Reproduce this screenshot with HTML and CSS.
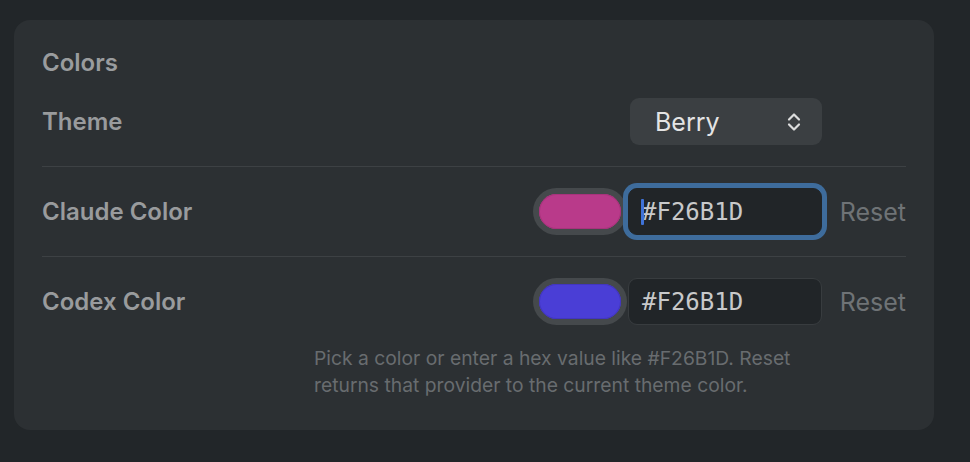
FILE: index.html
```html
<!DOCTYPE html>
<html lang="en">
<head>
<meta charset="utf-8">
<title>Colors</title>
<link rel="stylesheet" href="styles.css">
</head>
<body>
<section class="card">
  <h2 class="title">Colors</h2>
  <div class="row row-first">
    <span class="label">Theme</span>
    <div class="select">
      <span class="select-value">Berry</span>
      <svg class="chevrons" width="14" height="20" viewBox="0 0 14 20" aria-hidden="true">
        <path d="M2 7.5 L7 2.5 L12 7.5" fill="none" stroke="#dcdddd" stroke-width="2.2" stroke-linecap="round" stroke-linejoin="round"/>
        <path d="M2 12.5 L7 17.5 L12 12.5" fill="none" stroke="#dcdddd" stroke-width="2.2" stroke-linecap="round" stroke-linejoin="round"/>
      </svg>
    </div>
    <span class="reset-spacer"></span>
  </div>
  <div class="row">
    <span class="label">Claude Color</span>
    <span class="swatch"><span class="swatch-fill claude"></span></span>
    <div class="field focused"><span class="caret"></span>#F26B1D</div>
    <span class="reset">Reset</span>
  </div>
  <div class="row row-last">
    <span class="label">Codex Color</span>
    <span class="swatch"><span class="swatch-fill codex"></span></span>
    <div class="field">#F26B1D</div>
    <span class="reset">Reset</span>
  </div>
  <p class="help">Pick a color or enter a hex value like #F26B1D. Reset<br>returns that provider to the current theme color.</p>
</section>
</body>
</html>
```

FILE: styles.css
```css
html, body {
  margin: 0;
  padding: 0;
  background: #222629;
}
body {
  padding: 20px 36px 0 14px;
  font-family: Inter, "Noto Sans", sans-serif;
}
.card {
  background: #2c3033;
  border-radius: 16px;
  padding: 28px 28px 30px 28px;
  box-sizing: border-box;
  height: 410px;
}
.title {
  margin: 0;
  font-size: 24px;
  line-height: 30px;
  font-weight: 600;
  color: #9a9c9e;
}
.row {
  display: flex;
  align-items: center;
  padding: 21px 0;
  border-bottom: 1px solid #3d4144;
}
.row-first {
  padding-top: 20px;
}
.row-last {
  border-bottom: none;
  padding-bottom: 20px;
}
.label {
  flex: 1;
  font-size: 24px;
  font-weight: 600;
  color: #999b9d;
}
.select {
  width: 192px;
  height: 47px;
  box-sizing: border-box;
  background: #3b3f42;
  border-radius: 9px;
  display: flex;
  align-items: center;
  justify-content: space-between;
  padding: 0 21px 0 25px;
}
.select-value {
  font-size: 25px;
  color: #e4e4e4;
}
.chevrons {
  display: block;
}
.reset-spacer {
  width: 84px;
}
.swatch {
  width: 94px;
  height: 47px;
  box-sizing: border-box;
  border-radius: 24px;
  background: #45494c;
  padding: 6px;
  margin-right: 1px;
  display: flex;
}
.swatch-fill {
  flex: 1;
  border-radius: 18px;
}
.claude {
  background: #b93a8a;
  box-shadow: inset 0 0 0 1px #a8337c;
}
.codex {
  background: #4a3ed6;
  box-shadow: inset 0 0 0 1px #4236bf;
}
.field {
  width: 194px;
  height: 47px;
  box-sizing: border-box;
  background: #212528;
  border: 1px solid #383c3f;
  border-radius: 9px;
  display: flex;
  align-items: center;
  padding-left: 13px;
  font-family: "DejaVu Sans Mono", "Liberation Mono", monospace;
  font-size: 24px;
  color: #c8c9ca;
  position: relative;
}
.field.focused {
  border-color: #212528;
  box-shadow: 0 0 0 5px #3e6c9c;
}
.caret {
  position: absolute;
  left: 12px;
  top: 10px;
  width: 3px;
  height: 26px;
  background: #3f73d8;
  border-radius: 1px;
}
.reset {
  width: 84px;
  text-align: right;
  font-size: 25px;
  color: #6f7376;
}
.help {
  margin: 0 0 0 272px;
  font-size: 19.3px;
  line-height: 27px;
  color: #686c6f;
}
```
